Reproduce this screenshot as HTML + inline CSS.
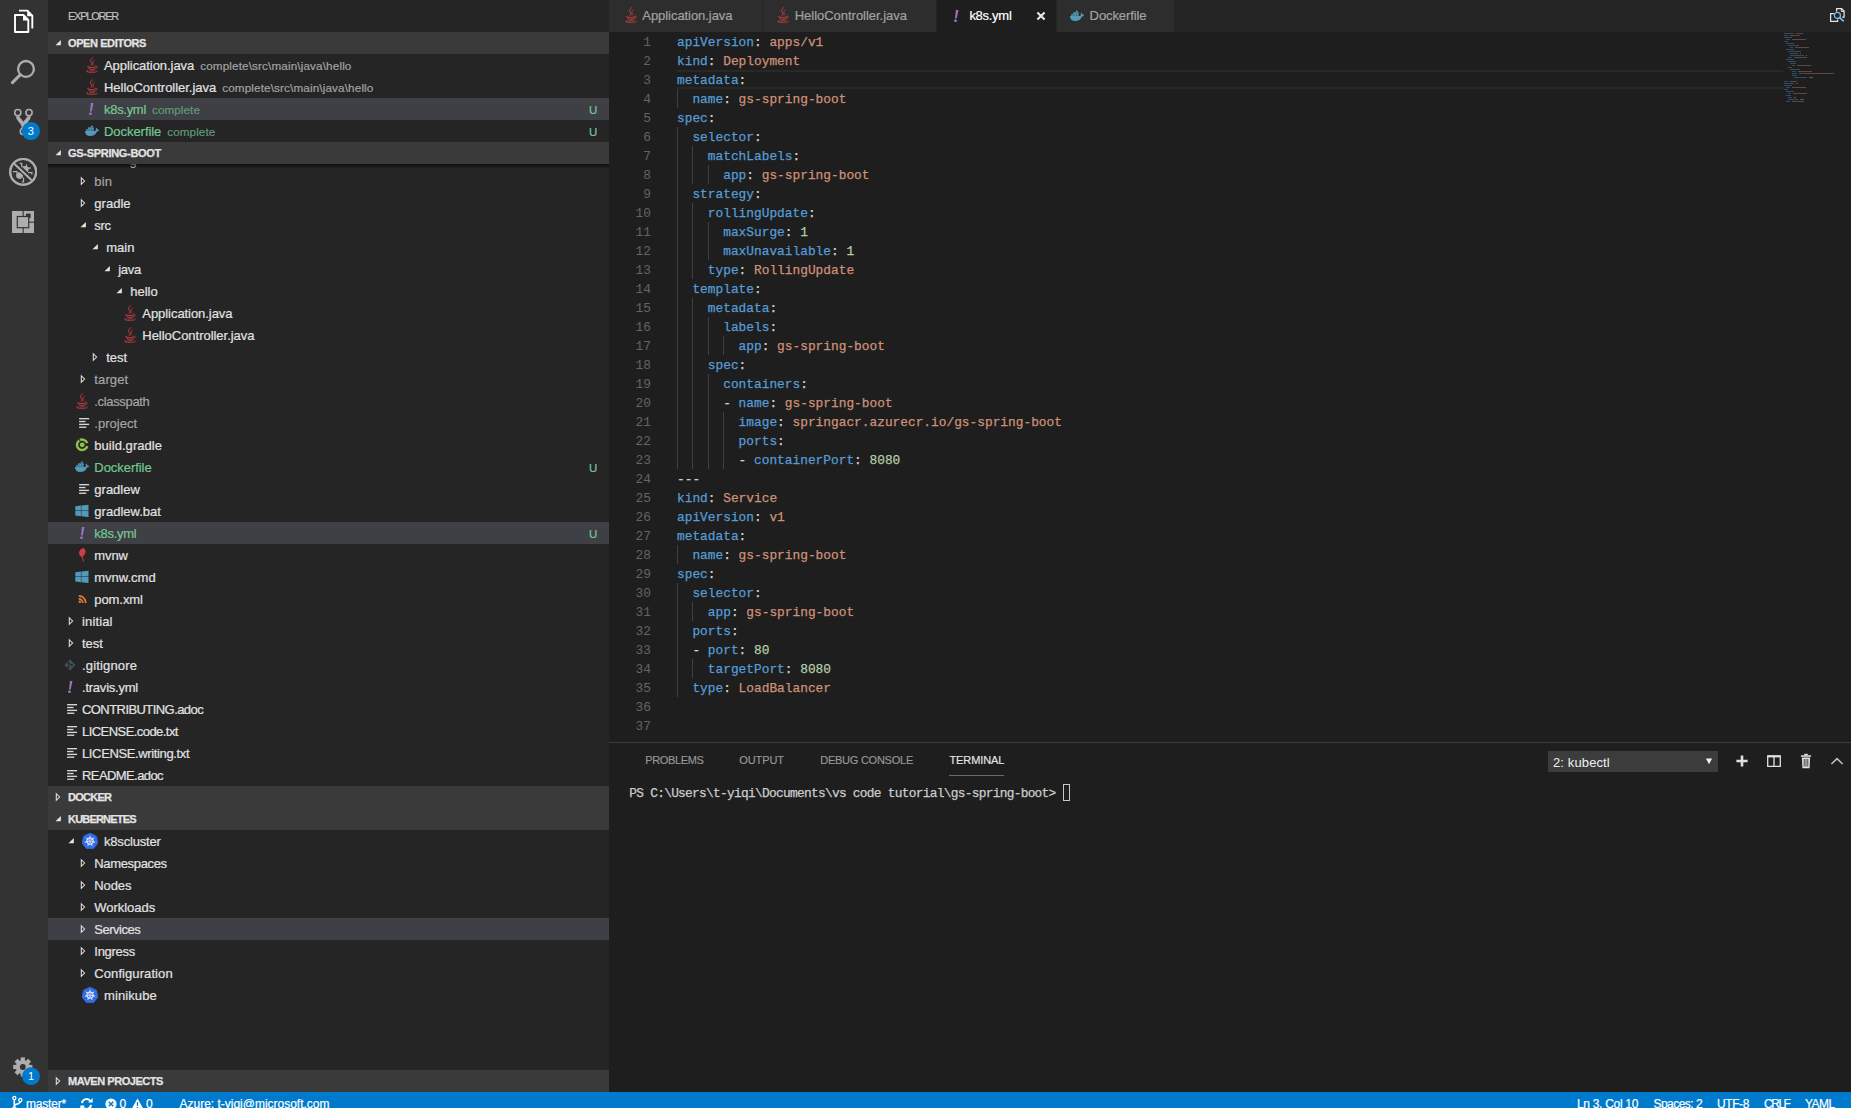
<!DOCTYPE html>
<html><head><meta charset="utf-8"><title>k8s.yml - gs-spring-boot - Visual Studio Code</title>
<style>
*{box-sizing:border-box;margin:0;padding:0}
html,body{width:1851px;height:1108px;overflow:hidden;background:#1e1e1e}
body{font-family:"Liberation Sans",sans-serif;font-size:13px;color:#ccc;position:relative}
.ic{position:absolute;display:block;overflow:visible}
#act{position:absolute;left:0;top:0;width:48px;height:1092px;background:#333}
#side{position:absolute;left:48px;top:0;width:561px;height:1092px;background:#252526;overflow:hidden}
.title{position:absolute;left:20px;top:0;height:32px;line-height:33px;font-size:11px;color:#c4c4c4;-webkit-text-stroke:0.15px}
.hdr{position:absolute;left:0;width:561px;height:22px;background:#3a3a3b;}
.ht{position:absolute;left:20px;top:0;line-height:22px;font-size:11px;font-weight:bold;color:#e4e4e4;white-space:nowrap;letter-spacing:-0.25px;-webkit-text-stroke:0.25px}
.row{position:absolute;left:0;width:561px;height:22px}
.row.sel{background:#3f3f46}
.lb{position:absolute;top:0.6px;line-height:22px;white-space:nowrap;color:#e2e2e2;letter-spacing:-0.1px;-webkit-text-stroke:0.2px}
.lb.ig{color:#a4a4a4}
.lb.g{color:#73c991}
.ds{margin-left:6px;font-size:11.7px;color:#a2a2a2;letter-spacing:-0.12px}
.lb.g .ds{color:#5f9a76}
.bd{position:absolute;right:11.6px;top:0.6px;line-height:22px;font-size:11.5px;color:#73c991;-webkit-text-stroke:0.2px}
.shadow{position:absolute;left:0;width:561px;height:5px;background:linear-gradient(#000 0,rgba(0,0,0,0) 100%);opacity:.6}
.peek{position:absolute;left:81.5px;top:149.6px;line-height:22px;color:#ddd;height:22px}
#tabs{position:absolute;left:609px;top:0;width:1242px;height:32px;background:#252526}
.tab{position:absolute;top:0;height:32px;background:#2d2d2d;border-right:1px solid #252526}
.tab.act{background:#1e1e1e}
.tab .tl{position:absolute;left:32.5px;top:0;line-height:32px;color:#a2a2a2;-webkit-text-stroke:0.2px;white-space:nowrap;letter-spacing:-0.1px}
.tab.act .tl{color:#fff}
#ed{position:absolute;left:609px;top:32px;width:1242px;height:710px;background:#1e1e1e;overflow:hidden}
.ln{position:absolute;left:0;height:19px;width:1242px;font-family:"Liberation Mono",monospace;font-size:12.83px;line-height:19px;white-space:pre}
.no{position:absolute;left:0;top:0.7px;width:42px;text-align:right;color:#646464}
.cd{position:absolute;left:68px;top:0.7px;-webkit-text-stroke:0.25px}
.k{color:#569cd6}.s{color:#ce9178}.n{color:#b5cea8}.p{color:#d4d4d4}
.gd{position:absolute;width:1px;background:#404040}
#cur{position:absolute;left:68px;top:38px;width:1106px;height:19px;border-top:2px solid #282828;border-bottom:2px solid #282828}
#mm{position:absolute;left:1175px;top:1px;width:52px;height:80px;opacity:.62}
#mm i{position:absolute;height:1px;display:block;opacity:.9}
#panel{position:absolute;left:609px;top:742px;width:1242px;height:350px;background:#1e1e1e;border-top:1px solid #3c3c3c}
.pt{position:absolute;top:6.2px;line-height:22px;font-size:11px;color:#989898;-webkit-text-stroke:0.15px;white-space:nowrap;letter-spacing:-0.1px}
.pt.a{color:#e7e7e7}
#term{-webkit-text-stroke:0.25px;position:absolute;left:20.2px;top:41px;font-family:"Liberation Mono",monospace;font-size:12.83px;letter-spacing:-0.708px;line-height:19px;color:#ccc;white-space:pre}
#tcur{position:absolute;left:453.9px;top:41px;width:7.3px;height:17px;border:1px solid #c8c8c8}
#sel{position:absolute;left:939px;top:8px;width:170px;height:21px;background:#3c3c3c;color:#f0f0f0;line-height:21px;padding-left:5px;font-size:13px}
#status{position:absolute;left:0;top:1092px;width:1851px;height:22px;background:#007acc;color:#fff;font-size:12px;line-height:25px;white-space:nowrap}
#status span{position:absolute;top:0;letter-spacing:-0.1px;-webkit-text-stroke:0.2px}
.abd{position:absolute;width:18px;height:18px;line-height:18px;text-align:center;font-size:11px;color:#fff;font-weight:normal}
</style></head><body>

<svg width="0" height="0" style="position:absolute">
<defs>
<symbol id="i-java" viewBox="0 0 16 16">
  <g fill="none" stroke="#cc3e44" stroke-linecap="round">
    <path d="M8.7 0.7 C6.3 2.5 5.7 3.9 7.2 5.4 C8.3 6.5 8.2 7.3 7.3 8.3" stroke-width="1.0"/>
    <path d="M10.3 3.3 C8.6 4.2 8.4 5.2 9.2 6.2 C9.7 6.9 9.5 7.6 9.0 8.1" stroke-width="0.8"/>
    <path d="M4.3 9.3 C3.0 9.6 3.2 10.2 5.0 10.4 C7.0 10.7 9.6 10.6 11.2 10.1" stroke-width="0.9"/>
    <path d="M11.5 9.2 C13.5 8.7 14.0 10.6 11.6 11.9" stroke-width="0.85"/>
    <path d="M5.0 11.4 C4.5 11.9 5.6 12.3 7.6 12.3 C9.2 12.3 10.2 12.1 10.8 11.8" stroke-width="0.9"/>
    <path d="M5.4 13.1 C5.1 13.5 6.2 13.8 7.6 13.8 C8.8 13.8 9.8 13.6 10.3 13.3" stroke-width="0.8"/>
    <path d="M3.4 13.7 C1.4 14.3 2.8 15.2 7.2 15.3 C11.0 15.4 13.6 14.8 13.5 14.1" stroke-width="0.95"/>
  </g>
</symbol>
<symbol id="i-yaml" viewBox="0 0 16 16">
  <path d="M8.0 2.0 L10.45 2.0 L8.65 10.4 L7.0 10.4 Z" fill="#a074c4"/>
  <ellipse cx="7.5" cy="12.8" rx="1.45" ry="1.3" fill="#a074c4"/>
</symbol>
<symbol id="i-docker" viewBox="0 0 16 16">
  <g fill="#519aba">
    <path d="M0.9 8.0 L10.6 8.0 C11.4 7.9 11.9 7.3 11.9 6.4 C11.6 5.9 11.8 5.2 12.4 4.8 C13.0 5.2 13.4 5.8 13.4 6.5 C14.0 6.3 14.7 6.5 15.1 6.9 C14.8 7.9 13.9 8.4 12.9 8.4 C12.0 11.4 9.4 13.0 6.0 13.0 C3.0 13.0 1.0 11.0 0.9 8.0 Z"/>
    <rect x="2.2" y="6.15" width="1.75" height="1.7"/><rect x="4.1" y="6.15" width="1.75" height="1.7"/><rect x="6.0" y="6.15" width="1.75" height="1.7"/><rect x="7.9" y="6.15" width="1.75" height="1.7"/>
    <rect x="4.1" y="4.3" width="1.75" height="1.7"/><rect x="6.0" y="4.3" width="1.75" height="1.7"/><rect x="7.9" y="4.3" width="1.75" height="1.7"/>
    <rect x="6.9" y="2.7" width="1.9" height="1.5"/>
  </g>
</symbol>
<symbol id="i-gradle" viewBox="0 0 16 16">
  <path d="M13.27 9.16 A5.25 5.25 0 1 1 13.19 6.18" fill="none" stroke="#8dc149" stroke-width="2.45" stroke-linecap="butt"/>
  <path d="M6.41 4.56 L4.85 1.77" stroke="#252526" stroke-width="1.0" fill="none"/>
  <circle cx="8.2" cy="7.8" r="2.4" fill="#8dc149"/>
</symbol>
<symbol id="i-file" viewBox="0 0 16 16">
  <g fill="#d4d7d6">
    <rect x="5.1" y="3.0" width="10" height="1.35"/>
    <rect x="5.1" y="5.85" width="6.4" height="1.35"/>
    <rect x="5.1" y="8.7" width="10" height="1.35"/>
    <rect x="5.1" y="11.55" width="7.2" height="1.35"/>
  </g>
</symbol>
<symbol id="i-win" viewBox="0 0 16 16">
  <g fill="#519aba">
    <path d="M1.3 3.3 L6.9 2.6 L6.9 7.6 L1.3 7.6 Z"/>
    <path d="M7.35 2.55 L14.5 1.7 L14.5 7.6 L7.35 7.6 Z"/>
    <path d="M1.3 8.05 L6.9 8.05 L6.9 13.2 L1.3 12.5 Z"/>
    <path d="M7.35 8.05 L14.5 8.05 L14.5 14.1 L7.35 13.25 Z"/>
  </g>
</symbol>
<symbol id="i-maven" viewBox="0 0 16 16">
  <path d="M9.3 1.1 C11.7 2.4 12.3 5.0 10.8 7.2 C10.0 8.4 9.0 9.0 8.8 9.6 L10.0 14.6 L9.2 14.8 L7.8 9.9 C5.8 9.2 4.7 7.2 5.1 5.2 C5.6 3.2 7.2 1.7 9.3 1.1 Z" fill="#cc3e44"/>
</symbol>
<symbol id="i-xml" viewBox="0 0 16 16">
  <g fill="none" stroke="#e37933" stroke-width="1.75">
    <path d="M4.7 4.9 A7.0 7.0 0 0 1 11.7 11.9"/>
    <path d="M4.7 7.9 A4.0 4.0 0 0 1 8.7 11.9"/>
  </g>
  <circle cx="5.8" cy="10.8" r="1.25" fill="#e37933"/>
</symbol>
<symbol id="i-git" viewBox="0 0 16 16">
  <path d="M8 2.6 L13.4 8 L8 13.4 L2.6 8 Z" fill="#41535b"/>
  <g stroke="#252526" stroke-width="0.9" fill="#252526">
    <circle cx="6.6" cy="6.0" r="0.8"/><circle cx="6.6" cy="10.4" r="0.8"/><circle cx="9.8" cy="8.2" r="0.8"/>
    <path d="M6.6 6 L6.6 10.4 M6.6 6.4 L9.8 8.2" fill="none"/>
  </g>
</symbol>
<symbol id="i-k8s" viewBox="0 0 16 16">
  <path d="M8.00 0.10 L14.37 3.17 L15.95 10.06 L11.54 15.59 L4.46 15.59 L0.05 10.06 L1.63 3.17 Z" fill="#326ce5" stroke="#326ce5" stroke-width="0.8" stroke-linejoin="round"/>
  <g fill="none" stroke="#fff">
    <circle cx="8.0" cy="8.1" r="3.25" stroke-width="0.95"/>
    <path d="M8.00 6.80 L8.00 2.80 M9.02 7.29 L12.14 4.80 M9.27 8.39 L13.17 9.28 M8.56 9.27 L10.30 12.88 M7.44 9.27 L5.70 12.88 M6.73 8.39 L2.83 9.28 M6.98 7.29 L3.86 4.80" stroke-width="0.85"/>
  </g>
  <circle cx="8.0" cy="8.1" r="0.9" fill="#fff"/>
</symbol>
<symbol id="tw-c" viewBox="0 0 16 16">
  <path d="M6.3 4.75 L9.6 8.0 L6.3 11.25 Z" fill="none" stroke="#e2e2e2" stroke-width="1.05" stroke-linejoin="miter"/>
</symbol>
<symbol id="tw-e" viewBox="0 0 16 16">
  <path d="M10.9 4.9 L10.9 10.2 L5.5 10.2 Z" fill="#e2e2e2"/>
</symbol>
</defs>
</svg>

<div id="act">
<svg class="ic" style="left:0;top:0;width:48px;height:1092px" viewBox="0 0 48 1092">
 <!-- files -->
 <g fill="none" stroke="#fff" stroke-width="1.9" stroke-linejoin="round">
  <path d="M15.0 15.0 L23.4 15.0 L28.3 19.9 L28.3 32.0 L15.0 32.0 Z"/>
  <path d="M19.0 10.6 L27.4 10.6 L32.3 15.6 L32.3 28.6"/>
 </g>
 <path d="M23.0 14.4 L23.0 20.4 L29.0 20.4 Z" fill="#fff"/>
 <path d="M27.2 10.0 L27.2 16.2 L33.2 16.2 Z" fill="#fff"/>
 <!-- search -->
 <circle cx="26.0" cy="68.9" r="7.9" fill="none" stroke="#adadad" stroke-width="2.3"/>
 <path d="M20.4 74.6 L12.4 82.6" stroke="#adadad" stroke-width="3.0" stroke-linecap="round"/>
 <!-- git -->
 <g fill="none" stroke="#adadad">
  <circle cx="17.8" cy="112.6" r="3.1" stroke-width="1.6"/>
  <circle cx="29.0" cy="112.6" r="3.1" stroke-width="1.6"/>
  <circle cx="23.4" cy="131.4" r="3.1" stroke-width="1.6"/>
  <path d="M17.7 116.2 C17.7 120.0 23.4 122.0 23.4 126.6 L23.4 128.2 M29.1 116.2 C29.1 120.0 23.4 122.0 23.4 126.6" stroke-width="3.7"/>
 </g>
 <circle cx="30.9" cy="131.0" r="9.1" fill="#007acc"/>
 <!-- debug -->
 <g fill="none" stroke="#adadad">
  <circle cx="23.15" cy="171.9" r="12.9" stroke-width="2.1"/>
  <path d="M12.8 171.7 L17.0 171.7 L17.0 173.6 M19.6 163.4 L21.7 163.4 L21.7 167.2 M26.6 164.4 L26.1 167.0 M27.6 168.2 L30.8 168.0 M28.0 172.7 L31.9 172.7 L31.9 174.6 M23.5 177.6 L23.5 181.8 L21.9 181.8" stroke-width="1.3"/>
 </g>
 <ellipse cx="19.6" cy="175.6" rx="3.5" ry="3.3" fill="#adadad"/>
 <path d="M22.0 166.8 C24.2 165.6 27.6 165.8 28.4 167.6 C29.0 169.2 28.6 171.0 27.6 172.2 Z" fill="#adadad"/>
 <path d="M14.0 163.6 L31.4 180.1" stroke="#333" stroke-width="4.4" fill="none"/>
 <path d="M14.0 163.6 L31.4 180.1" stroke="#adadad" stroke-width="2.1" fill="none"/>
 <circle cx="23.15" cy="171.9" r="12.9" stroke-width="2.1" stroke="#adadad" fill="none"/>
 <!-- extensions -->
 <rect x="12" y="211" width="22" height="22" fill="#adadad"/>
 <g fill="#333">
  <rect x="22.6" y="211" width="1.1" height="5.5"/>
  <rect x="22.6" y="227.5" width="1.1" height="5.5"/>
  <rect x="28.6" y="221.6" width="5.4" height="1.1"/>
  <rect x="16.7" y="215.9" width="12.6" height="12.4"/>
  <rect x="26.0" y="213.6" width="4.6" height="4.6"/>
 </g>
 <rect x="17.9" y="217.1" width="10.2" height="10.0" fill="#adadad"/>
 <!-- gear -->
 <g transform="translate(22.8 1067)">
  <g fill="#adadad">
   <circle r="7.0"/>
   <rect x="-2.1" y="-9.6" width="4.2" height="19.2"/>
   <rect x="-2.1" y="-9.6" width="4.2" height="19.2" transform="rotate(45)"/>
   <rect x="-2.1" y="-9.6" width="4.2" height="19.2" transform="rotate(90)"/>
   <rect x="-2.1" y="-9.6" width="4.2" height="19.2" transform="rotate(135)"/>
  </g>
  <circle r="2.9" fill="#333"/>
 </g>
 <circle cx="31.0" cy="1076.2" r="8.9" fill="#007acc"/>
</svg>
<div class="abd" style="left:21.9px;top:122px">3</div>
<div class="abd" style="left:22px;top:1067.2px">1</div>
</div>
<div id="side">
<div class="title" style="letter-spacing:-1.240px">EXPLORER</div>
<div class="hdr" style="top:32px"><svg class="ic" style="left:2px;top:2.5px;width:16px;height:16px" ><use href="#tw-e"/></svg><span class="ht" style="letter-spacing:-0.411px;">OPEN EDITORS</span></div>
<div class="row" style="top:54px"><svg class="ic" style="left:36px;top:3px;width:16px;height:16px" ><use href="#i-java"/></svg><span class="lb " style="left:56px;letter-spacing:-0.054px;">Application.java<span class="ds" style="letter-spacing:0.137px;">complete\src\main\java\hello</span></span></div>
<div class="row" style="top:76px"><svg class="ic" style="left:36px;top:3px;width:16px;height:16px" ><use href="#i-java"/></svg><span class="lb " style="left:56px;letter-spacing:-0.027px;">HelloController.java<span class="ds" style="letter-spacing:0.137px;">complete\src\main\java\hello</span></span></div>
<div class="row sel" style="top:98px"><svg class="ic" style="left:34.900000000000006px;top:3px;width:16px;height:16px" ><use href="#i-yaml"/></svg><span class="lb g" style="left:56px;letter-spacing:-0.295px;">k8s.yml<span class="ds" style="letter-spacing:0.070px;">complete</span></span><span class="bd">U</span></div>
<div class="row" style="top:120px"><svg class="ic" style="left:35.5px;top:3px;width:16px;height:16px" ><use href="#i-docker"/></svg><span class="lb g" style="left:56px;letter-spacing:-0.050px;">Dockerfile<span class="ds" style="letter-spacing:0.070px;">complete</span></span><span class="bd">U</span></div>
<div class="peek">g</div>
<div class="hdr" style="top:142px"><svg class="ic" style="left:2px;top:2.5px;width:16px;height:16px" ><use href="#tw-e"/></svg><span class="ht" style="letter-spacing:-0.298px;">GS-SPRING-BOOT</span></div>
<div class="shadow" style="top:164px"></div>
<div class="row" style="top:170px"><svg class="ic" style="left:27px;top:3px;width:16px;height:16px" ><use href="#tw-c"/></svg><span class="lb ig" style="left:46.3px;letter-spacing:0.214px;">bin</span></div>
<div class="row" style="top:192px"><svg class="ic" style="left:27px;top:3px;width:16px;height:16px" ><use href="#tw-c"/></svg><span class="lb " style="left:46.3px;letter-spacing:0.027px;">gradle</span></div>
<div class="row" style="top:214px"><svg class="ic" style="left:27px;top:3px;width:16px;height:16px" ><use href="#tw-e"/></svg><span class="lb " style="left:46.3px;letter-spacing:-0.348px;">src</span></div>
<div class="row" style="top:236px"><svg class="ic" style="left:39px;top:3px;width:16px;height:16px" ><use href="#tw-e"/></svg><span class="lb " style="left:58.3px;letter-spacing:-0.022px;">main</span></div>
<div class="row" style="top:258px"><svg class="ic" style="left:51px;top:3px;width:16px;height:16px" ><use href="#tw-e"/></svg><span class="lb " style="left:70.3px;letter-spacing:-0.315px;">java</span></div>
<div class="row" style="top:280px"><svg class="ic" style="left:63px;top:3px;width:16px;height:16px" ><use href="#tw-e"/></svg><span class="lb " style="left:82.30000000000001px;letter-spacing:-0.034px;">hello</span></div>
<div class="row" style="top:302px"><svg class="ic" style="left:73.9px;top:3px;width:16px;height:16px" ><use href="#i-java"/></svg><span class="lb " style="left:94.30000000000001px;letter-spacing:-0.054px;">Application.java</span></div>
<div class="row" style="top:324px"><svg class="ic" style="left:73.9px;top:3px;width:16px;height:16px" ><use href="#i-java"/></svg><span class="lb " style="left:94.30000000000001px;letter-spacing:-0.027px;">HelloController.java</span></div>
<div class="row" style="top:346px"><svg class="ic" style="left:39px;top:3px;width:16px;height:16px" ><use href="#tw-c"/></svg><span class="lb " style="left:58.3px;letter-spacing:-0.067px;">test</span></div>
<div class="row" style="top:368px"><svg class="ic" style="left:27px;top:3px;width:16px;height:16px" ><use href="#tw-c"/></svg><span class="lb ig" style="left:46.3px;letter-spacing:0.125px;">target</span></div>
<div class="row" style="top:390px"><svg class="ic" style="left:25.900000000000006px;top:3px;width:16px;height:16px" ><use href="#i-java"/></svg><span class="lb ig" style="left:46.3px;letter-spacing:-0.335px;">.classpath</span></div>
<div class="row" style="top:412px"><svg class="ic" style="left:25.900000000000006px;top:3px;width:16px;height:16px" ><use href="#i-file"/></svg><span class="lb ig" style="left:46.3px;letter-spacing:0.020px;">.project</span></div>
<div class="row" style="top:434px"><svg class="ic" style="left:25.900000000000006px;top:3px;width:16px;height:16px" ><use href="#i-gradle"/></svg><span class="lb " style="left:46.3px;letter-spacing:0.040px;">build.gradle</span></div>
<div class="row" style="top:456px"><svg class="ic" style="left:25.900000000000006px;top:3px;width:16px;height:16px" ><use href="#i-docker"/></svg><span class="lb g" style="left:46.3px;letter-spacing:-0.050px;">Dockerfile</span><span class="bd">U</span></div>
<div class="row" style="top:478px"><svg class="ic" style="left:25.900000000000006px;top:3px;width:16px;height:16px" ><use href="#i-file"/></svg><span class="lb " style="left:46.3px;letter-spacing:0.010px;">gradlew</span></div>
<div class="row" style="top:500px"><svg class="ic" style="left:25.900000000000006px;top:3px;width:16px;height:16px" ><use href="#i-win"/></svg><span class="lb " style="left:46.3px;letter-spacing:0.018px;">gradlew.bat</span></div>
<div class="row sel" style="top:522px"><svg class="ic" style="left:25.900000000000006px;top:3px;width:16px;height:16px" ><use href="#i-yaml"/></svg><span class="lb g" style="left:46.3px;letter-spacing:-0.295px;">k8s.yml</span><span class="bd">U</span></div>
<div class="row" style="top:544px"><svg class="ic" style="left:25.900000000000006px;top:3px;width:16px;height:16px" ><use href="#i-maven"/></svg><span class="lb " style="left:46.3px;letter-spacing:-0.088px;">mvnw</span></div>
<div class="row" style="top:566px"><svg class="ic" style="left:25.900000000000006px;top:3px;width:16px;height:16px" ><use href="#i-win"/></svg><span class="lb " style="left:46.3px;letter-spacing:-0.013px;">mvnw.cmd</span></div>
<div class="row" style="top:588px"><svg class="ic" style="left:25.900000000000006px;top:3px;width:16px;height:16px" ><use href="#i-xml"/></svg><span class="lb " style="left:46.3px;letter-spacing:-0.075px;">pom.xml</span></div>
<div class="row" style="top:610px"><svg class="ic" style="left:15px;top:3px;width:16px;height:16px" ><use href="#tw-c"/></svg><span class="lb " style="left:34px;letter-spacing:0.139px;">initial</span></div>
<div class="row" style="top:632px"><svg class="ic" style="left:15px;top:3px;width:16px;height:16px" ><use href="#tw-c"/></svg><span class="lb " style="left:34px;letter-spacing:-0.067px;">test</span></div>
<div class="row" style="top:654px"><svg class="ic" style="left:13.899999999999999px;top:3px;width:16px;height:16px" ><use href="#i-git"/></svg><span class="lb " style="left:34px;letter-spacing:0.162px;">.gitignore</span></div>
<div class="row" style="top:676px"><svg class="ic" style="left:13.899999999999999px;top:3px;width:16px;height:16px" ><use href="#i-yaml"/></svg><span class="lb " style="left:34px;letter-spacing:-0.227px;">.travis.yml</span></div>
<div class="row" style="top:698px"><svg class="ic" style="left:13.899999999999999px;top:3px;width:16px;height:16px" ><use href="#i-file"/></svg><span class="lb " style="left:34px;letter-spacing:-0.568px;">CONTRIBUTING.adoc</span></div>
<div class="row" style="top:720px"><svg class="ic" style="left:13.899999999999999px;top:3px;width:16px;height:16px" ><use href="#i-file"/></svg><span class="lb " style="left:34px;letter-spacing:-0.555px;">LICENSE.code.txt</span></div>
<div class="row" style="top:742px"><svg class="ic" style="left:13.899999999999999px;top:3px;width:16px;height:16px" ><use href="#i-file"/></svg><span class="lb " style="left:34px;letter-spacing:-0.366px;">LICENSE.writing.txt</span></div>
<div class="row" style="top:764px"><svg class="ic" style="left:13.899999999999999px;top:3px;width:16px;height:16px" ><use href="#i-file"/></svg><span class="lb " style="left:34px;letter-spacing:-0.584px;">README.adoc</span></div>
<div class="hdr" style="top:786px"><svg class="ic" style="left:2px;top:2.5px;width:16px;height:16px" ><use href="#tw-c"/></svg><span class="ht" style="letter-spacing:-0.729px;">DOCKER</span></div>
<div class="hdr" style="top:808px"><svg class="ic" style="left:2px;top:2.5px;width:16px;height:16px" ><use href="#tw-e"/></svg><span class="ht" style="letter-spacing:-0.800px;">KUBERNETES</span></div>
<div class="row" style="top:830px"><svg class="ic" style="left:14.899999999999999px;top:3px;width:16px;height:16px" ><use href="#tw-e"/></svg><svg class="ic" style="left:34px;top:3px;width:16px;height:16px" ><use href="#i-k8s"/></svg><span class="lb " style="left:56px;letter-spacing:-0.193px;">k8scluster</span></div>
<div class="row" style="top:852px"><svg class="ic" style="left:27px;top:3px;width:16px;height:16px" ><use href="#tw-c"/></svg><span class="lb " style="left:46.3px;letter-spacing:-0.338px;">Namespaces</span></div>
<div class="row" style="top:874px"><svg class="ic" style="left:27px;top:3px;width:16px;height:16px" ><use href="#tw-c"/></svg><span class="lb " style="left:46.3px;letter-spacing:-0.096px;">Nodes</span></div>
<div class="row" style="top:896px"><svg class="ic" style="left:27px;top:3px;width:16px;height:16px" ><use href="#tw-c"/></svg><span class="lb " style="left:46.3px;letter-spacing:-0.043px;">Workloads</span></div>
<div class="row sel" style="top:918px"><svg class="ic" style="left:27px;top:3px;width:16px;height:16px" ><use href="#tw-c"/></svg><span class="lb " style="left:46.3px;letter-spacing:-0.495px;">Services</span></div>
<div class="row" style="top:940px"><svg class="ic" style="left:27px;top:3px;width:16px;height:16px" ><use href="#tw-c"/></svg><span class="lb " style="left:46.3px;letter-spacing:-0.277px;">Ingress</span></div>
<div class="row" style="top:962px"><svg class="ic" style="left:27px;top:3px;width:16px;height:16px" ><use href="#tw-c"/></svg><span class="lb " style="left:46.3px;letter-spacing:0.082px;">Configuration</span></div>
<div class="row" style="top:984px"><svg class="ic" style="left:34px;top:3px;width:16px;height:16px" ><use href="#i-k8s"/></svg><span class="lb " style="left:56px;letter-spacing:0.096px;">minikube</span></div>
<div class="hdr" style="top:1070px"><svg class="ic" style="left:2px;top:2.5px;width:16px;height:16px" ><use href="#tw-c"/></svg><span class="ht" style="letter-spacing:-0.448px;">MAVEN PROJECTS</span></div>
</div>
<div id="tabs"><div class="tab" style="left:0px;width:154px"><svg class="ic" style="left:13.6px;top:7px;width:16px;height:16px" ><use href="#i-java"/></svg><span class="tl" style="left:33.3px;letter-spacing:-0.054px">Application.java</span></div><div class="tab" style="left:154px;width:173.5px"><svg class="ic" style="left:11.9px;top:7px;width:16px;height:16px" ><use href="#i-java"/></svg><span class="tl" style="left:31.7px;letter-spacing:-0.022px">HelloController.java</span></div><div class="tab act" style="left:327.5px;width:120px"><svg class="ic" style="left:11.3px;top:8px;width:16px;height:16px" ><use href="#i-yaml"/></svg><span class="tl" style="left:32.9px;letter-spacing:-0.280px">k8s.yml</span><svg class="ic" style="left:99.5px;top:10.5px;width:10px;height:10px" viewBox="0 0 10 10"><path d="M1.4 1.4 L8.6 8.6 M8.6 1.4 L1.4 8.6" stroke="#e8e8e8" stroke-width="2.1" fill="none"/></svg></div><div class="tab" style="left:447.5px;width:118.5px"><svg class="ic" style="left:12.3px;top:8px;width:16px;height:16px" ><use href="#i-docker"/></svg><span class="tl" style="left:33.1px;letter-spacing:-0.100px">Dockerfile</span></div><svg class="ic" style="left:1218px;top:4px;width:20px;height:20px" viewBox="0 0 20 20">
      <g fill="none" stroke="#e4e4e4" stroke-width="1.25">
       <path d="M9.6 7.6 L9.6 4.6 L14.6 4.6 L17.1 7.1 L17.1 13.0 L15.2 13.0"/>
       <path d="M14.3 4.6 L14.3 7.4 L17.1 7.4" stroke-width="1.0"/>
       <path d="M7.2 9.5 L3.6 9.5 L3.6 17.4 L10.6 17.4 L10.6 15.4"/>
      </g>
      <circle cx="10.4" cy="11.4" r="3.0" fill="none" stroke="#75beff" stroke-width="1.2"/>
      <path d="M12.6 13.6 L16.8 17.4" stroke="#75beff" stroke-width="1.6"/>
    </svg></div>
<div id="ed">
<div id="cur"></div>
<div class="gd" style="left:68.0px;top:57px;height:19px"></div>
<div class="gd" style="left:68.0px;top:95px;height:342px"></div>
<div class="gd" style="left:83.4px;top:114px;height:38px"></div>
<div class="gd" style="left:98.8px;top:133px;height:19px"></div>
<div class="gd" style="left:83.4px;top:171px;height:76px"></div>
<div class="gd" style="left:98.8px;top:190px;height:38px"></div>
<div class="gd" style="left:83.4px;top:266px;height:171px"></div>
<div class="gd" style="left:98.8px;top:285px;height:38px"></div>
<div class="gd" style="left:114.2px;top:304px;height:19px"></div>
<div class="gd" style="left:98.8px;top:342px;height:95px"></div>
<div class="gd" style="left:114.2px;top:380px;height:57px"></div>
<div class="gd" style="left:68.0px;top:513px;height:19px"></div>
<div class="gd" style="left:68.0px;top:551px;height:114px"></div>
<div class="gd" style="left:83.4px;top:570px;height:19px"></div>
<div class="gd" style="left:83.4px;top:627px;height:19px"></div>
<div class="ln" style="top:0px"><span class="no">1</span><span class="cd"><span class="k">apiVersion</span><span class="p">: </span><span class="s">apps/v1</span></span></div>
<div class="ln" style="top:19px"><span class="no">2</span><span class="cd"><span class="k">kind</span><span class="p">: </span><span class="s">Deployment</span></span></div>
<div class="ln" style="top:38px"><span class="no">3</span><span class="cd"><span class="k">metadata</span><span class="p">:</span></span></div>
<div class="ln" style="top:57px"><span class="no">4</span><span class="cd">  <span class="k">name</span><span class="p">: </span><span class="s">gs-spring-boot</span></span></div>
<div class="ln" style="top:76px"><span class="no">5</span><span class="cd"><span class="k">spec</span><span class="p">:</span></span></div>
<div class="ln" style="top:95px"><span class="no">6</span><span class="cd">  <span class="k">selector</span><span class="p">:</span></span></div>
<div class="ln" style="top:114px"><span class="no">7</span><span class="cd">    <span class="k">matchLabels</span><span class="p">:</span></span></div>
<div class="ln" style="top:133px"><span class="no">8</span><span class="cd">      <span class="k">app</span><span class="p">: </span><span class="s">gs-spring-boot</span></span></div>
<div class="ln" style="top:152px"><span class="no">9</span><span class="cd">  <span class="k">strategy</span><span class="p">:</span></span></div>
<div class="ln" style="top:171px"><span class="no">10</span><span class="cd">    <span class="k">rollingUpdate</span><span class="p">:</span></span></div>
<div class="ln" style="top:190px"><span class="no">11</span><span class="cd">      <span class="k">maxSurge</span><span class="p">: </span><span class="n">1</span></span></div>
<div class="ln" style="top:209px"><span class="no">12</span><span class="cd">      <span class="k">maxUnavailable</span><span class="p">: </span><span class="n">1</span></span></div>
<div class="ln" style="top:228px"><span class="no">13</span><span class="cd">    <span class="k">type</span><span class="p">: </span><span class="s">RollingUpdate</span></span></div>
<div class="ln" style="top:247px"><span class="no">14</span><span class="cd">  <span class="k">template</span><span class="p">:</span></span></div>
<div class="ln" style="top:266px"><span class="no">15</span><span class="cd">    <span class="k">metadata</span><span class="p">:</span></span></div>
<div class="ln" style="top:285px"><span class="no">16</span><span class="cd">      <span class="k">labels</span><span class="p">:</span></span></div>
<div class="ln" style="top:304px"><span class="no">17</span><span class="cd">        <span class="k">app</span><span class="p">: </span><span class="s">gs-spring-boot</span></span></div>
<div class="ln" style="top:323px"><span class="no">18</span><span class="cd">    <span class="k">spec</span><span class="p">:</span></span></div>
<div class="ln" style="top:342px"><span class="no">19</span><span class="cd">      <span class="k">containers</span><span class="p">:</span></span></div>
<div class="ln" style="top:361px"><span class="no">20</span><span class="cd">      <span class="p">- </span><span class="k">name</span><span class="p">: </span><span class="s">gs-spring-boot</span></span></div>
<div class="ln" style="top:380px"><span class="no">21</span><span class="cd">        <span class="k">image</span><span class="p">: </span><span class="s">springacr.azurecr.io/gs-spring-boot</span></span></div>
<div class="ln" style="top:399px"><span class="no">22</span><span class="cd">        <span class="k">ports</span><span class="p">:</span></span></div>
<div class="ln" style="top:418px"><span class="no">23</span><span class="cd">        <span class="p">- </span><span class="k">containerPort</span><span class="p">: </span><span class="n">8080</span></span></div>
<div class="ln" style="top:437px"><span class="no">24</span><span class="cd"><span class="p">---</span></span></div>
<div class="ln" style="top:456px"><span class="no">25</span><span class="cd"><span class="k">kind</span><span class="p">: </span><span class="s">Service</span></span></div>
<div class="ln" style="top:475px"><span class="no">26</span><span class="cd"><span class="k">apiVersion</span><span class="p">: </span><span class="s">v1</span></span></div>
<div class="ln" style="top:494px"><span class="no">27</span><span class="cd"><span class="k">metadata</span><span class="p">:</span></span></div>
<div class="ln" style="top:513px"><span class="no">28</span><span class="cd">  <span class="k">name</span><span class="p">: </span><span class="s">gs-spring-boot</span></span></div>
<div class="ln" style="top:532px"><span class="no">29</span><span class="cd"><span class="k">spec</span><span class="p">:</span></span></div>
<div class="ln" style="top:551px"><span class="no">30</span><span class="cd">  <span class="k">selector</span><span class="p">:</span></span></div>
<div class="ln" style="top:570px"><span class="no">31</span><span class="cd">    <span class="k">app</span><span class="p">: </span><span class="s">gs-spring-boot</span></span></div>
<div class="ln" style="top:589px"><span class="no">32</span><span class="cd">  <span class="k">ports</span><span class="p">:</span></span></div>
<div class="ln" style="top:608px"><span class="no">33</span><span class="cd">  <span class="p">- </span><span class="k">port</span><span class="p">: </span><span class="n">80</span></span></div>
<div class="ln" style="top:627px"><span class="no">34</span><span class="cd">    <span class="k">targetPort</span><span class="p">: </span><span class="n">8080</span></span></div>
<div class="ln" style="top:646px"><span class="no">35</span><span class="cd">  <span class="k">type</span><span class="p">: </span><span class="s">LoadBalancer</span></span></div>
<div class="ln" style="top:665px"><span class="no">36</span><span class="cd"></span></div>
<div class="ln" style="top:684px"><span class="no">37</span><span class="cd"></span></div>
<div id="mm"><i style="left:0px;top:0px;width:10px;background:#3f6f9a"></i><i style="left:12px;top:0px;width:7px;background:#8f6858"></i><i style="left:0px;top:2px;width:4px;background:#3f6f9a"></i><i style="left:6px;top:2px;width:10px;background:#8f6858"></i><i style="left:0px;top:4px;width:8px;background:#3f6f9a"></i><i style="left:2px;top:6px;width:4px;background:#3f6f9a"></i><i style="left:8px;top:6px;width:14px;background:#8f6858"></i><i style="left:0px;top:8px;width:4px;background:#3f6f9a"></i><i style="left:2px;top:10px;width:8px;background:#3f6f9a"></i><i style="left:4px;top:12px;width:11px;background:#3f6f9a"></i><i style="left:6px;top:14px;width:3px;background:#3f6f9a"></i><i style="left:11px;top:14px;width:14px;background:#8f6858"></i><i style="left:2px;top:16px;width:8px;background:#3f6f9a"></i><i style="left:4px;top:18px;width:13px;background:#3f6f9a"></i><i style="left:6px;top:20px;width:8px;background:#3f6f9a"></i><i style="left:16px;top:20px;width:1px;background:#7f8f78"></i><i style="left:6px;top:22px;width:14px;background:#3f6f9a"></i><i style="left:22px;top:22px;width:1px;background:#7f8f78"></i><i style="left:4px;top:24px;width:4px;background:#3f6f9a"></i><i style="left:10px;top:24px;width:13px;background:#8f6858"></i><i style="left:2px;top:26px;width:8px;background:#3f6f9a"></i><i style="left:4px;top:28px;width:8px;background:#3f6f9a"></i><i style="left:6px;top:30px;width:6px;background:#3f6f9a"></i><i style="left:8px;top:32px;width:3px;background:#3f6f9a"></i><i style="left:13px;top:32px;width:14px;background:#8f6858"></i><i style="left:4px;top:34px;width:4px;background:#3f6f9a"></i><i style="left:6px;top:36px;width:10px;background:#3f6f9a"></i><i style="left:8px;top:38px;width:4px;background:#3f6f9a"></i><i style="left:14px;top:38px;width:14px;background:#8f6858"></i><i style="left:8px;top:40px;width:5px;background:#3f6f9a"></i><i style="left:15px;top:40px;width:35px;background:#8f6858"></i><i style="left:8px;top:42px;width:5px;background:#3f6f9a"></i><i style="left:10px;top:44px;width:13px;background:#3f6f9a"></i><i style="left:25px;top:44px;width:4px;background:#7f8f78"></i><i style="left:0px;top:48px;width:4px;background:#3f6f9a"></i><i style="left:6px;top:48px;width:7px;background:#8f6858"></i><i style="left:0px;top:50px;width:10px;background:#3f6f9a"></i><i style="left:12px;top:50px;width:2px;background:#8f6858"></i><i style="left:0px;top:52px;width:8px;background:#3f6f9a"></i><i style="left:2px;top:54px;width:4px;background:#3f6f9a"></i><i style="left:8px;top:54px;width:14px;background:#8f6858"></i><i style="left:0px;top:56px;width:4px;background:#3f6f9a"></i><i style="left:2px;top:58px;width:8px;background:#3f6f9a"></i><i style="left:4px;top:60px;width:3px;background:#3f6f9a"></i><i style="left:9px;top:60px;width:14px;background:#8f6858"></i><i style="left:2px;top:62px;width:5px;background:#3f6f9a"></i><i style="left:4px;top:64px;width:4px;background:#3f6f9a"></i><i style="left:10px;top:64px;width:2px;background:#7f8f78"></i><i style="left:4px;top:66px;width:10px;background:#3f6f9a"></i><i style="left:16px;top:66px;width:4px;background:#7f8f78"></i><i style="left:2px;top:68px;width:4px;background:#3f6f9a"></i><i style="left:8px;top:68px;width:12px;background:#8f6858"></i></div>
</div>
<div id="panel">
<span class="pt" style="left:36.2px;letter-spacing:-0.355px">PROBLEMS</span>
<span class="pt" style="left:130.3px;letter-spacing:-0.106px">OUTPUT</span>
<span class="pt" style="left:211.2px;letter-spacing:-0.244px">DEBUG CONSOLE</span>
<span class="pt a" style="left:340.4px;letter-spacing:-0.078px">TERMINAL</span>
<div style="position:absolute;left:340px;top:32px;width:55px;height:1px;background:#6b6b6b"></div>
<div id="sel"><span style="position:relative;top:0.8px;letter-spacing:0.12px">2: kubectl</span><svg class="ic" style="left:157px;top:7px;width:8px;height:7px" viewBox="0 0 8 7"><path d="M0.9 0.5 L7.1 0.5 L4 6.2 Z" fill="#f0f0f0"/></svg></div>
<svg class="ic" style="left:1126px;top:11px;width:14px;height:14px" viewBox="0 0 14 14"><path d="M7 1.4 L7 12.6 M1.4 7 L12.6 7" stroke="#e0e0e0" stroke-width="2.6" fill="none"/></svg>
<svg class="ic" style="left:1157px;top:11px;width:16px;height:14px" viewBox="0 0 16 14"><path d="M1.7 2.0 L14.3 2.0 L14.3 12.3 L1.7 12.3 Z M8 2.0 L8 12.3" stroke="#e0e0e0" stroke-width="1.3" fill="none"/><rect x="1.7" y="1.4" width="12.6" height="2.0" fill="#e0e0e0"/></svg>
<svg class="ic" style="left:1190px;top:10px;width:14px;height:16px" viewBox="0 0 14 16"><path d="M2.9 4.5 L11.1 4.5 L10.6 15.2 L3.4 15.2 Z" fill="#e0e0e0"/><rect x="1.9" y="2.3" width="10.2" height="1.5" fill="#e0e0e0"/><rect x="5.2" y="0.8" width="3.6" height="1.7" fill="#e0e0e0"/><path d="M5.2 6.0 L5.2 13.6 M7.0 6.0 L7.0 13.6 M8.8 6.0 L8.8 13.6" stroke="#1e1e1e" stroke-width="0.8"/></svg>
<svg class="ic" style="left:1221px;top:13px;width:14px;height:10px" viewBox="0 0 14 10"><path d="M1.4 8.0 L7 2.6 L12.6 8.0" stroke="#c0c0c0" stroke-width="1.5" fill="none"/></svg>
<div id="term">PS C:\Users\t-yiqi\Documents\vs code tutorial\gs-spring-boot&gt; </div>
<div id="tcur"></div>
</div>
<div id="status">
<svg class="ic" style="left:11px;top:3px;width:12px;height:16px" viewBox="0 0 12 16">
 <g fill="none" stroke="#fff" stroke-width="1.3">
  <circle cx="3.3" cy="3.0" r="1.6"/><circle cx="9.3" cy="5.0" r="1.6"/><circle cx="3.3" cy="13.4" r="1.6"/>
  <path d="M3.3 4.6 L3.3 11.8 M9.3 6.6 C9.3 9.6 3.3 8.6 3.3 11.4" stroke-width="1.6"/>
 </g>
</svg>
<span style="letter-spacing:-0.192px;left:26px">master*</span>
<svg class="ic" style="left:80px;top:5px;width:13px;height:14px" viewBox="0 0 13 14">
 <g fill="none" stroke="#fff" stroke-width="2.0">
  <path d="M10.6 4.4 A4.6 4.6 0 0 0 2.0 6.2"/><path d="M2.4 9.6 A4.6 4.6 0 0 0 11.0 7.8"/>
 </g>
 <path d="M8.2 5.4 L12.6 5.4 L12.6 1.0 Z" fill="#fff"/><path d="M4.8 8.6 L0.4 8.6 L0.4 13.0 Z" fill="#fff"/>
</svg>
<svg class="ic" style="left:104.5px;top:5.5px;width:12px;height:12px" viewBox="0 0 12 12"><circle cx="6" cy="6" r="5.6" fill="#fff"/><path d="M3.7 3.7 L8.3 8.3 M8.3 3.7 L3.7 8.3" stroke="#007acc" stroke-width="1.5"/></svg>
<span style="left:119.5px">0</span>
<svg class="ic" style="left:130.5px;top:5.5px;width:13px;height:12px" viewBox="0 0 13 12"><path d="M6.5 0.4 L12.8 11.6 L0.2 11.6 Z" fill="#fff"/><path d="M6.5 4.0 L6.5 8.0 M6.5 9.0 L6.5 10.4" stroke="#007acc" stroke-width="1.3"/></svg>
<span style="left:146px">0</span>
<span style="letter-spacing:-0.008px;left:179.5px">Azure: t-yiqi@microsoft.com</span>
<span style="letter-spacing:-0.310px;left:1577px">Ln 3, Col 10</span>
<span style="letter-spacing:-0.531px;left:1653.5px">Spaces: 2</span>
<span style="letter-spacing:-0.420px;left:1717px">UTF-8</span>
<span style="letter-spacing:-1.461px;left:1764px">CRLF</span>
<span style="letter-spacing:-0.574px;left:1805px">YAML</span>
</div>
</body></html>
